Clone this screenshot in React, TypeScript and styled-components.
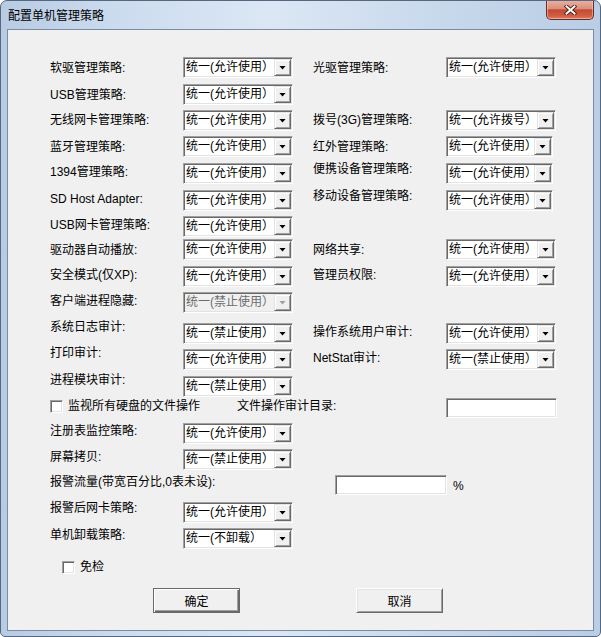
import styled, { createGlobalStyle, css } from 'styled-components'

const GlobalStyle = createGlobalStyle`
  html, body {
    margin: 0;
    padding: 0;
    background: #ffffff;
  }

  body {
    font-family: "Liberation Sans", "Noto Sans CJK SC", sans-serif;
    font-size: 12px;
    color: #000;
  }
`

export default function App() {
  return (
    <>
      <GlobalStyle />
      <Window>
        <TitleBar>
          <Title>配置单机管理策略</Title>
          <CloseButton>
            <svg width="13" height="10" viewBox="0 0 13 10">
              <path d="M2.5 1.5 L10.5 8.5 M10.5 1.5 L2.5 8.5" stroke="#4a1b12" strokeWidth="3.8" strokeLinecap="square" />
              <path d="M2.5 1.5 L10.5 8.5 M10.5 1.5 L2.5 8.5" stroke="#ffffff" strokeWidth="2" strokeLinecap="square" />
            </svg>
          </CloseButton>
        </TitleBar>

        <Client>
          <Row $h={27}>
            <Label $dy={4}>软驱管理策略:</Label>
            <Combo value="统一(允许使用）" />
            <Label $dy={4} $col={4}>光驱管理策略:</Label>
            <Combo value="统一(允许使用）" />
          </Row>
          <Row $h={26}>
            <Label $dy={4}>USB管理策略:</Label>
            <Combo value="统一(允许使用）" />
          </Row>
          <Row $h={26}>
            <Label $dy={3}>无线网卡管理策略:</Label>
            <Combo value="统一(允许使用）" />
            <Label $dy={3} $col={4}>拨号(3G)管理策略:</Label>
            <Combo value="统一(允许拨号）" />
          </Row>
          <Row $h={27}>
            <Label $dy={4}>蓝牙管理策略:</Label>
            <Combo value="统一(允许使用）" />
            <Label $dy={4} $col={4}>红外管理策略:</Label>
            <Combo value="统一(允许使用）" width={107} />
          </Row>
          <Row $h={27}>
            <Label $dy={2}>1394管理策略:</Label>
            <Combo value="统一(允许使用）" />
            <Label $dy={-1} $col={4}>便携设备管理策略:</Label>
            <Combo value="统一(允许使用）" width={107} />
          </Row>
          <Row $h={26}>
            <Label $dy={2}>SD Host Adapter:</Label>
            <Combo value="统一(允许使用）" />
            <Label $dy={-1} $col={4}>移动设备管理策略:</Label>
            <Combo value="统一(允许使用）" width={107} />
          </Row>
          <Row $h={23}>
            <Label $dy={2}>USB网卡管理策略:</Label>
            <Combo value="统一(允许使用）" />
          </Row>
          <Row $h={27}>
            <Label $dy={4}>驱动器自动播放:</Label>
            <Combo value="统一(允许使用）" />
            <Label $dy={4} $col={4}>网络共享:</Label>
            <Combo value="统一(允许使用）" />
          </Row>
          <Row $h={26}>
            <Label $dy={2}>安全模式(仅XP):</Label>
            <Combo value="统一(允许使用）" />
            <Label $dy={2} $col={4}>管理员权限:</Label>
            <Combo value="统一(允许使用）" />
          </Row>
          <Row $h={31}>
            <Label $dy={2}>客户端进程隐藏:</Label>
            <Combo value="统一(禁止使用）" disabled />
          </Row>
          <Row $h={26}>
            <Label $dy={-3}>系统日志审计:</Label>
            <Combo value="统一(禁止使用）" />
            <Label $dy={2} $col={4}>操作系统用户审计:</Label>
            <Combo value="统一(允许使用）" />
          </Row>
          <Row $h={27}>
            <Label $dy={-3}>打印审计:</Label>
            <Combo value="统一(允许使用）" />
            <Label $dy={2} $col={4}>NetStat审计:</Label>
            <Combo value="统一(禁止使用）" />
          </Row>
          <Row $h={22}>
            <Label $dy={-3}>进程模块审计:</Label>
            <Combo value="统一(禁止使用）" />
          </Row>

          <FlexRow $h={25}>
            <CheckGroup $w={187} $dy={1}>
              <CheckBox />
              <span>监视所有硬盘的文件操作</span>
            </CheckGroup>
            <FlexLabel $w={209} $dy={1}>文件操作审计目录:</FlexLabel>
            <TextBox $w={111} />
          </FlexRow>

          <Row $h={26}>
            <Label $dy={1}>注册表监控策略:</Label>
            <Combo value="统一(允许使用）" />
          </Row>
          <Row $h={26}>
            <Label $dy={1}>屏幕拷贝:</Label>
            <Combo value="统一(禁止使用）" />
          </Row>

          <FlexRow $h={27}>
            <FlexLabel $w={285} $dy={0}>报警流量(带宽百分比,0表未设):</FlexLabel>
            <TextBox $w={112} />
            <Percent>%</Percent>
          </FlexRow>

          <Row $h={26}>
            <Label $dy={-1}>报警后网卡策略:</Label>
            <Combo value="统一(允许使用）" />
          </Row>
          <Row $h={32}>
            <Label $dy={0}>单机卸载策略:</Label>
            <Combo value="统一(不卸载）" />
          </Row>

          <FlexRow $h={28} $indent={12}>
            <CheckGroup $dy={0}>
              <CheckBox />
              <span>免检</span>
            </CheckGroup>
          </FlexRow>

          <ButtonBar>
            <PushButton $default>确定</PushButton>
            <PushButton>取消</PushButton>
          </ButtonBar>
        </Client>
      </Window>
    </>
  )
}

function Combo({ value, width, disabled }: { value: string; width?: number; disabled?: boolean }) {
  return (
    <ComboBox $w={width} $disabled={disabled}>
      <ComboText $disabled={disabled}>{value}</ComboText>
      <DropButton $disabled={disabled} />
    </ComboBox>
  )
}

// Style

const sunken = css`
  border: 1px solid;
  border-color: #a0a0a0 #ffffff #ffffff #a0a0a0;
  box-shadow: inset 1px 1px #696969, inset -1px -1px #e3e3e3;
`

const Window = styled.div`
  box-sizing: border-box;
  width: 601px;
  height: 637px;
  display: flex;
  flex-direction: column;
  padding: 0 6px 5px;
  border: 1px solid #56687f;
  border-radius: 7px 7px 5px 5px;
  background: linear-gradient(to right, #b7cbe3 0%, #cbdbee 18%, #dbe7f4 45%, #c9d9ec 72%, #b9cde5 100%);
  overflow: hidden;
`

const TitleBar = styled.div`
  height: 28px;
  display: flex;
  justify-content: space-between;
  align-items: flex-start;
`

const Title = styled.span`
  margin-left: 1px;
  line-height: 28px;
  font-family: "Noto Sans CJK SC", sans-serif;
  font-size: 12px;
  color: #000;
`

const CloseButton = styled.div`
  box-sizing: border-box;
  width: 48px;
  height: 20px;
  margin-top: -1px;
  display: flex;
  align-items: center;
  justify-content: center;
  border: 1px solid #6e2b20;
  border-top: none;
  border-radius: 0 0 5px 5px;
  background: linear-gradient(to bottom, #eab2a5 0%, #dc8f7b 45%, #c44a31 52%, #cf5f45 85%, #e0866a 100%);
  box-shadow: inset 0 0 0 1px rgba(255, 210, 200, 0.5);
`

const Client = styled.div`
  flex: 1;
  display: flex;
  flex-direction: column;
  padding: 27px 0 0 42px;
  border: 1px solid #7b8ca2;
  background: #f0f0f0;
`

const Row = styled.div<{ $h: number }>`
  height: ${(p) => p.$h}px;
  display: grid;
  grid-template-columns: 133px 110px 20px 133px 110px;
  align-items: start;
`

const Label = styled.span<{ $dy: number; $col?: number }>`
  grid-column: ${(p) => p.$col ?? 1};
  margin-top: ${(p) => p.$dy}px;
  line-height: 14px;
  white-space: nowrap;
`

const FlexRow = styled.div<{ $h: number; $indent?: number }>`
  height: ${(p) => p.$h}px;
  display: flex;
  align-items: flex-start;
  padding-left: ${(p) => p.$indent ?? 0}px;
`

const FlexLabel = styled.span<{ $w: number; $dy: number }>`
  width: ${(p) => p.$w}px;
  flex: none;
  margin-top: ${(p) => p.$dy}px;
  line-height: 14px;
  white-space: nowrap;
`

const CheckGroup = styled.label<{ $w?: number; $dy: number }>`
  width: ${(p) => (p.$w ? `${p.$w}px` : 'auto')};
  flex: none;
  display: flex;
  align-items: center;
  gap: 5px;
  margin-top: ${(p) => p.$dy}px;
  line-height: 14px;
  white-space: nowrap;
`

const CheckBox = styled.span`
  box-sizing: border-box;
  width: 13px;
  height: 13px;
  background: #fff;
  ${sunken}
`

const TextBox = styled.div<{ $w: number }>`
  box-sizing: border-box;
  width: ${(p) => p.$w}px;
  height: 20px;
  flex: none;
  background: #fff;
  ${sunken}
`

const Percent = styled.span`
  margin: 4px 0 0 6px;
  line-height: 14px;
`

const ComboBox = styled.div<{ $w?: number; $disabled?: boolean }>`
  box-sizing: border-box;
  width: ${(p) => p.$w ?? 110}px;
  height: 21px;
  display: flex;
  padding: 1px;
  background: ${(p) => (p.$disabled ? '#f0f0f0' : '#ffffff')};
  ${sunken}
`

const ComboText = styled.span<{ $disabled?: boolean }>`
  flex: 1;
  min-width: 0;
  padding-left: 1px;
  line-height: 17px;
  white-space: nowrap;
  color: ${(p) => (p.$disabled ? '#6d6d6d' : '#000')};
`

const DropButton = styled.span<{ $disabled?: boolean }>`
  box-sizing: border-box;
  width: 17px;
  flex: none;
  display: flex;
  align-items: center;
  justify-content: center;
  background: #f0f0f0;
  border: 1px solid;
  border-color: #e3e3e3 #696969 #696969 #e3e3e3;
  box-shadow: inset 1px 1px #ffffff, inset -1px -1px #a0a0a0;

  &::after {
    content: '';
    width: 7px;
    height: 4px;
    background: ${(p) => (p.$disabled ? '#a0a0a0' : '#000')};
    clip-path: polygon(0 0, 100% 0, 50% 100%);
  }
`

const ButtonBar = styled.div`
  display: flex;
  gap: 116px;
  padding-left: 103px;
`

const PushButton = styled.button<{ $default?: boolean }>`
  box-sizing: border-box;
  width: 87px;
  height: 25px;
  padding: 0;
  font: inherit;
  color: #000;
  background: #f0f0f0;
  border: 1px solid;
  border-color: #ffffff #696969 #696969 #ffffff;
  box-shadow: inset 1px 1px #e3e3e3, inset -1px -1px #a0a0a0;

  ${(p) =>
    p.$default &&
    css`
      border-color: #696969;
      box-shadow: inset 1px 1px #ffffff, inset -1px -1px #696969, inset -2px -2px #a0a0a0;
    `}
`
